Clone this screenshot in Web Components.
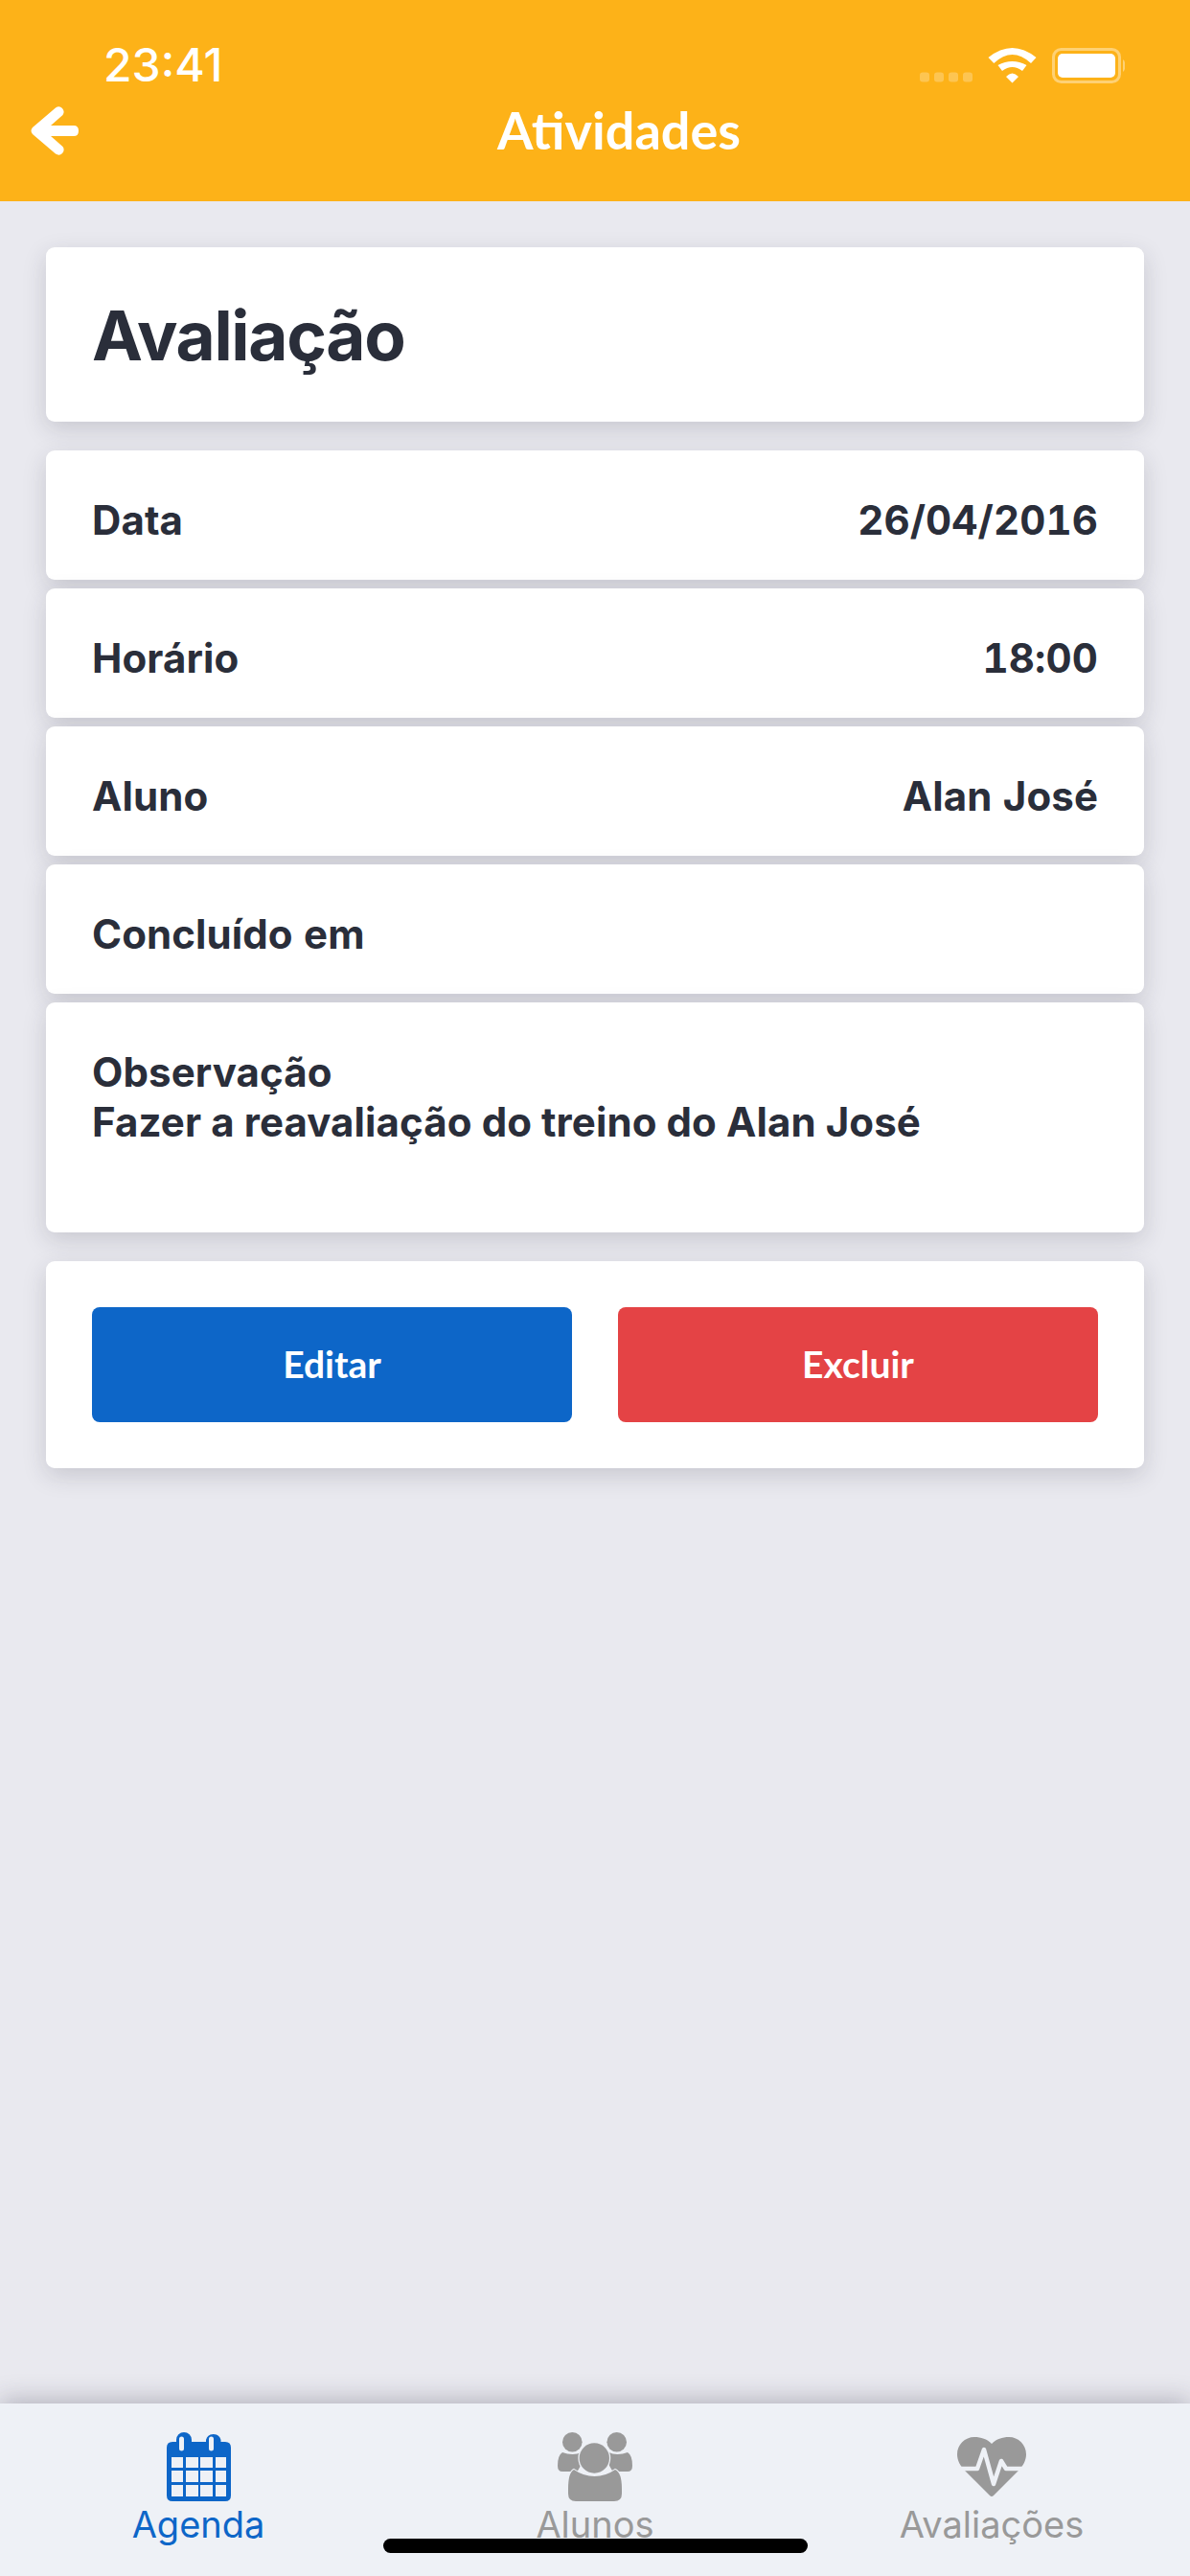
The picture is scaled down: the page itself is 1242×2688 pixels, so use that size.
<!DOCTYPE html>
<html lang="pt-BR">
<head>
<meta charset="utf-8">
<title>Atividades</title>
<style>
  html, body { margin: 0; padding: 0; }
  body { width: 1242px; height: 2688px; overflow: hidden; font-family: Inter, "Liberation Sans", sans-serif; }
</style>
</head>
<body>
<app-screen>
  <app-header slot="header" title="Atividades" time="23:41"></app-header>

  <info-card kind="title">Avaliação</info-card>

  <detail-list>
    <detail-row label="Data" value="26/04/2016"></detail-row>
    <detail-row label="Horário" value="18:00"></detail-row>
    <detail-row label="Aluno" value="Alan José"></detail-row>
    <detail-row label="Concluído em"></detail-row>
    <info-card kind="note">Observação<br>Fazer a reavaliação do treino do Alan José</info-card>
  </detail-list>

  <info-card kind="actions">
    <action-button color="#0d66c8">Editar</action-button>
    <action-button color="#e44345">Excluir</action-button>
  </info-card>

  <tab-bar slot="footer">
    <tab-item label="Agenda" icon="calendar" active></tab-item>
    <tab-item label="Alunos" icon="people"></tab-item>
    <tab-item label="Avaliações" icon="heart"></tab-item>
  </tab-bar>
</app-screen>

<script>
"use strict";

(() => {
  const ICONS = {
    calendar: `
      <svg width="67" height="72" viewBox="0 0 67 72">
        <path fill="currentColor" fill-rule="evenodd" d="M10 10V8a8 8 0 0 1 16 0v2h15V8a8 8 0 0 1 15.500 0v2H61q6 0 6 6v50q0 6-6 6H6q-6 0-6-6V16q0-6 6-6Z
          M15.500 4.500a2.500 2.500 0 0 0-2.500 2.500v10a2.500 2.500 0 0 0 5 0V7a2.500 2.500 0 0 0-2.500-2.500Z
          M46.500 4.500a2.500 2.500 0 0 0-2.500 2.500v10a2.500 2.500 0 0 0 5 0V7a2.500 2.500 0 0 0-2.500-2.500Z
          M5 26v11h12V26Z M20 26v11h13V26Z M35 26v11h13V26Z M51 26v11h11V26Z
          M5 40v12h12V40Z M20 40v12h13V40Z M35 40v12h13V40Z M51 40v12h11V40Z
          M5 55v12h12V55Z M20 55v12h13V55Z M35 55v12h13V55Z M51 55v12h11V55Z"/>
      </svg>`,
    people: `
      <svg width="80" height="72" viewBox="20 28 80 72">
        <g fill="currentColor">
          <circle cx="36.300" cy="38.300" r="10.300"/>
          <circle cx="82.700" cy="38.300" r="10.300"/>
          <path d="M26 49q5 2 10.500 2t9 -2q4 2 4 6l-8 14H26q-5 0-5-6 0-11 5-14Z"/>
          <path d="M94 49q-5 2-10.500 2t-9 -2q-4 2-4 6l8 14H94q5 0 5-6 0-11-5-14Z"/>
          <path d="M38 67q10 7 21.500 7t21.500-7q7 3 7 20v5q0 8-8 8H40q-8 0-8-8v-5q0-17 6-20Z" stroke="#eef1f6" stroke-width="2" paint-order="stroke"/>
          <circle cx="59.300" cy="55" r="15.700" stroke="#eef1f6" stroke-width="2.500" paint-order="stroke"/>
        </g>
      </svg>`,
    heart: `
      <svg width="72" height="63" viewBox="0 0 72 63">
        <path fill="currentColor" d="M36 7C31 2 25 0 18 0 8 0 0 8 0 18c0 6 3 12 8 17l26 26q2 2 4 0l26-26c5-5 8-11 8-17C72 8 64 0 54 0c-7 0-13 2-18 7Z"/>
        <path fill="none" stroke="#eef1f6" stroke-width="4.500" stroke-linejoin="round" stroke-linecap="round" d="M-2 33H21L28 13 38 49 46 25 51 33H74"/>
      </svg>`
  };

  customElements.define("app-screen", class extends HTMLElement {
    constructor() {
      super();

      this.attachShadow({mode: "open"}).innerHTML = `
        <style>
          :host {
            display: flex;
            flex-direction: column;
            position: relative;
            width: 1242px;
            height: 2688px;
            background-color: #e9e9ef;
            color: #2a2e3a;
            overflow: hidden;
          }

          main {
            flex: 1;
            display: flex;
            flex-direction: column;
            gap: 30px;
            padding: 48px 48px 0;
          }

          #home {
            position: absolute;
            left: 400px;
            top: 2649px;
            width: 443px;
            height: 15px;
            border-radius: 8px;
            background-color: #000;
          }
        </style>
        <slot name="header"></slot>
        <main><slot></slot></main>
        <slot name="footer"></slot>
        <div id="home"></div>
      `;
    }
  });

  customElements.define("app-header", class extends HTMLElement {
    constructor() {
      super();

      this.attachShadow({mode: "open"}).innerHTML = `
        <style>
          :host {
            display: block;
            height: 210px;
            background-color: #fdb218;
            color: #fff;
          }

          #status {
            display: flex;
            align-items: center;
            height: 44px;
            padding: 46px 68px 0 108px;
          }

          #time {
            flex: 1;
            font: 500 48px/44px Inter, sans-serif;
          }

          #status svg {
            display: block;
          }

          #nav {
            display: flex;
            align-items: center;
            height: 60px;
            margin-top: 16px;
            padding: 0 32px;
          }

          #title {
            flex: 1;
            text-align: center;
            font: 700 54px/60px Lato, sans-serif;
          }
        </style>
        <div id="status">
          <div id="time"></div>
          <svg width="138" height="37" viewBox="0 0 138 37">
            <g fill="#fff" opacity=".25">
              <rect x="0" y="25.500" width="10" height="10" rx="3"/>
              <rect x="15" y="25.500" width="10" height="10" rx="3"/>
              <rect x="30" y="25.500" width="10" height="10" rx="3"/>
              <rect x="45" y="25.500" width="10" height="10" rx="3"/>
            </g>
            <path fill="#fff" d="M71.500 10Q96.500-10 121.500 10L116 16Q96.500-2 77.300 16Z
              M81.500 18Q96.500 10 111.500 18L107 24Q96.500 16 86 24Z
              M90 30Q96.500 23 103 30L96.500 36.500Z"/>
          </svg>
          <svg width="76" height="37" viewBox="0 0 76 37">
            <rect x="1.500" y="1.500" width="69" height="34" rx="8" fill="none" stroke="#fff" stroke-opacity=".4" stroke-width="3"/>
            <rect x="6" y="6" width="60" height="25" rx="5" fill="#fff"/>
            <path d="M74 12q2.500 2 2.500 6.500T74 25Z" fill="#fff" fill-opacity=".4"/>
          </svg>
        </div>
        <div id="nav">
          <svg width="50" height="51" viewBox="0 0 50 51">
            <path fill="#fff" d="M26 1.500q4-2.500 7 .5 3 3.500 .5 7L21 20H45q5 0 5 5.500T45 31H21L33.500 42q2.500 3.500-.5 7-3 3-7 .5L2 29q-3-3.500 0-7Z"/>
          </svg>
          <div id="title"></div>
        </div>
      `;

      this.shadowRoot.getElementById("time").textContent = this.getAttribute("time");
      this.shadowRoot.getElementById("title").textContent = this.getAttribute("title");
    }
  });

  customElements.define("info-card", class extends HTMLElement {
    constructor() {
      super();

      this.attachShadow({mode: "open"}).innerHTML = `
        <style>
          :host {
            display: block;
            background-color: #fff;
            border-radius: 9px;
            box-shadow: 0 8px 24px rgba(40, 40, 60, 0.17);
            color: #2a2e3a;
          }

          :host([kind="title"]) {
            height: 182px;
            box-sizing: border-box;
            padding: 52px 48px 0;
            font: 700 71px/80px Inter, sans-serif;
            letter-spacing: -1.300px;
          }

          :host([kind="note"]) {
            height: 240px;
            box-sizing: border-box;
            padding: 47px 48px 0;
            font: 700 42px/52px Inter, sans-serif;
            letter-spacing: 0.100px;
          }

          :host([kind="actions"]) {
            display: grid;
            grid-template-columns: 1fr 1fr;
            gap: 48px;
            padding: 48px;
          }
        </style>
        <slot></slot>
      `;
    }
  });

  customElements.define("detail-list", class extends HTMLElement {
    constructor() {
      super();

      this.attachShadow({mode: "open"}).innerHTML = `
        <style>
          :host {
            display: flex;
            flex-direction: column;
            gap: 9px;
          }
        </style>
        <slot></slot>
      `;
    }
  });

  customElements.define("detail-row", class extends HTMLElement {
    constructor() {
      super();

      this.attachShadow({mode: "open"}).innerHTML = `
        <style>
          :host {
            display: flex;
            justify-content: space-between;
            align-items: center;
            box-sizing: border-box;
            height: 135px;
            padding: 11px 48px 0;
            background-color: #fff;
            border-radius: 9px;
            box-shadow: 0 8px 24px rgba(40, 40, 60, 0.17);
            font: 700 42px/52px Inter, sans-serif;
            letter-spacing: 0.100px;
            font-variant-numeric: tabular-nums;
            color: #2a2e3a;
          }
        </style>
        <span id="label"></span>
        <span id="value"></span>
      `;

      this.shadowRoot.getElementById("label").textContent = this.getAttribute("label");
      this.shadowRoot.getElementById("value").textContent = this.getAttribute("value") || "";
    }
  });

  customElements.define("action-button", class extends HTMLElement {
    constructor() {
      super();

      this.attachShadow({mode: "open"}).innerHTML = `
        <style>
          :host {
            display: flex;
            justify-content: center;
            align-items: center;
            box-sizing: border-box;
            height: 120px;
            padding-bottom: 2px;
            border-radius: 8px;
            color: #fff;
            font: 700 39px/44px Lato, sans-serif;
          }
        </style>
        <slot></slot>
      `;

      this.style.backgroundColor = this.getAttribute("color");
    }
  });

  customElements.define("tab-bar", class extends HTMLElement {
    constructor() {
      super();

      this.attachShadow({mode: "open"}).innerHTML = `
        <style>
          :host {
            display: grid;
            grid-template-columns: repeat(3, 1fr);
            height: 180px;
            background-color: #eef1f6;
            box-shadow: 0 -4px 24px rgba(40, 40, 60, 0.28);
          }
        </style>
        <slot></slot>
      `;
    }
  });

  customElements.define("tab-item", class extends HTMLElement {
    constructor() {
      super();

      this.attachShadow({mode: "open"}).innerHTML = `
        <style>
          :host {
            display: flex;
            flex-direction: column;
            align-items: center;
            padding-top: 30px;
            color: #999;
            font: 400 38px/48px Inter, sans-serif;
          }

          :host([active]) {
            color: #0d66c8;
          }

          #icon {
            display: flex;
            align-items: center;
            height: 72px;
          }

          svg {
            display: block;
          }
        </style>
        <div id="icon"></div>
        <div id="label"></div>
      `;

      this.shadowRoot.getElementById("icon").innerHTML = ICONS[this.getAttribute("icon")];
      this.shadowRoot.getElementById("label").textContent = this.getAttribute("label");
    }
  });
})();
</script>
</body>
</html>
